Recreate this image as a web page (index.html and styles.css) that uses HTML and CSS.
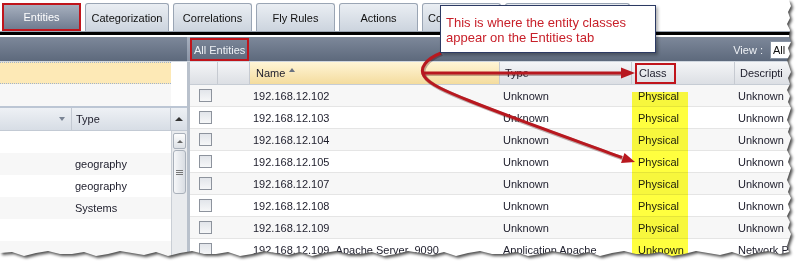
FILE: index.html
```html
<!DOCTYPE html>
<html lang="en">
<head>
    <meta charset="UTF-8">
    <title>Entities</title>
    <link rel="stylesheet" href="styles.css">
</head>
<body>
    <div class="shot">
        <div class="frame">
            <div class="tabs">
                <div class="tab active">Entities</div>
                <div class="tab long">Categorization</div>
                <div class="tab">Correlations</div>
                <div class="tab">Fly Rules</div>
                <div class="tab">Actions</div>
                <div class="tab part">Co</div>
                <div class="tab wide"></div>
            </div>
            <div class="tab-rule"></div>

            <div class="titlebar">
                <div class="title-left"></div>
                <div class="split"></div>
                <div class="title-right">
                    <span class="title">All Entities</span>
                    <span class="view">View :</span>
                    <span class="view-select">All</span>
                </div>
            </div>

            <div class="panes">
                <div class="left">
                    <div class="filter-row"><div class="filter"></div></div>
                    <div class="blank-row"></div>
                    <div class="lhead">
                        <div class="lh-a"><span class="tri-down"></span></div>
                        <div class="lh-b">Type</div>
                        <div class="lh-c"><span class="tri-up"></span></div>
                    </div>
                    <div class="lbody">
                        <div class="lrows">
                            <div class="lrow"></div>
                            <div class="lrow">geography</div>
                            <div class="lrow">geography</div>
                            <div class="lrow">Systems</div>
                            <div class="lrow"></div>
                            <div class="lrow"></div>
                        </div>
                        <div class="vscroll">
                            <div class="sbtn"><span class="tri-up small"></span></div>
                            <div class="thumb"><span class="grip"></span></div>
                        </div>
                    </div>
                </div>

                <div class="split"></div>

                <div class="right">
                    <div class="hrow">
                        <div class="hc"></div>
                        <div class="hc"></div>
                        <div class="hc sorted">Name<span class="caret"></span></div>
                        <div class="hc">Type</div>
                        <div class="hc cls"><span class="mark">Class</span></div>
                        <div class="hc">Descripti</div>
                    </div>
                    <div class="rows">
                        <div class="row"><span class="cb"></span><span></span><span class="c-name">192.168.12.102</span><span class="c-type">Unknown</span><span class="c-class">Physical</span><span class="c-desc">Unknown</span></div>
                        <div class="row"><span class="cb"></span><span></span><span class="c-name">192.168.12.103</span><span class="c-type">Unknown</span><span class="c-class">Physical</span><span class="c-desc">Unknown</span></div>
                        <div class="row"><span class="cb"></span><span></span><span class="c-name">192.168.12.104</span><span class="c-type">Unknown</span><span class="c-class">Physical</span><span class="c-desc">Unknown</span></div>
                        <div class="row"><span class="cb"></span><span></span><span class="c-name">192.168.12.105</span><span class="c-type">Unknown</span><span class="c-class">Physical</span><span class="c-desc">Unknown</span></div>
                        <div class="row"><span class="cb"></span><span></span><span class="c-name">192.168.12.107</span><span class="c-type">Unknown</span><span class="c-class">Physical</span><span class="c-desc">Unknown</span></div>
                        <div class="row"><span class="cb"></span><span></span><span class="c-name">192.168.12.108</span><span class="c-type">Unknown</span><span class="c-class">Physical</span><span class="c-desc">Unknown</span></div>
                        <div class="row"><span class="cb"></span><span></span><span class="c-name">192.168.12.109</span><span class="c-type">Unknown</span><span class="c-class">Physical</span><span class="c-desc">Unknown</span></div>
                        <div class="row"><span class="cb"></span><span></span><span class="c-name">192.168.12.109_Apache Server_9090</span><span class="c-type">Application Apache</span><span class="c-class">Unknown</span><span class="c-desc">Network P</span></div>
                    </div>
                </div>
            </div>

            <!-- annotation layer -->
            <div class="highlight"></div>

            <svg class="arrows" width="792" height="258" viewBox="0 0 792 258">
                <g fill="none" stroke="rgba(60,0,0,0.3)" stroke-width="4" transform="translate(1,1)">
                    <path d="M441 53 C426 59 419 68 424 76 C429 84 445 91 470 101 C520 121 580 142 622 157.5"/>
                    <path d="M423 73 L622 73"/>
                </g>
                <g fill="none" stroke="#b8181f" stroke-width="3">
                    <path d="M441 53 C426 59 419 68 424 76 C429 84 445 91 470 101 C520 121 580 142 622 157.5"/>
                    <path d="M423 73 L622 73"/>
                </g>
                <g fill="#b8181f">
                    <polygon points="635,162 621,163 624.5,153"/>
                    <polygon points="635,73 621,67.5 621,78.5"/>
                </g>
            </svg>

            <div class="callout">This is where the entity classes<br>appear on the Entities tab</div>
        </div>
    </div>
</body>
</html>
```

FILE: styles.css
```css
* {
    margin: 0;
    padding: 0;
    box-sizing: border-box;
}

body {
    background: #fff;
    font-family: "Liberation Sans", Arial, sans-serif;
    font-size: 11px;
    color: #1d1d2b;
}

/* torn screenshot edge */
.shot {
    width: 796px;
    height: 262px;
    filter: drop-shadow(2px 2px 1.5px rgba(0, 0, 0, 0.7));
}

.frame {
    position: relative;
    width: 792px;
    height: 258px;
    overflow: hidden;
    background: #fff;
    clip-path: polygon(0 0, 789px 0,
        791px 6px, 788px 12px, 790px 18px, 787px 24px, 790px 30px, 789px 36px, 791px 42px, 788px 48px,
        790px 54px, 787px 60px, 789px 66px, 791px 72px, 788px 78px, 790px 84px, 787px 90px, 790px 96px,
        788px 102px, 791px 108px, 789px 114px, 787px 120px, 790px 126px, 788px 132px, 791px 138px, 789px 144px,
        787px 150px, 790px 156px, 788px 162px, 791px 168px, 789px 174px, 787px 180px, 790px 186px, 788px 192px,
        791px 198px, 788px 204px, 790px 210px, 787px 216px, 790px 222px, 788px 228px, 791px 234px, 789px 240px,
        787px 246px, 789px 252px,
        780px 254px, 768px 251px, 756px 253px, 744px 256px, 732px 252px, 720px 255px, 708px 253px, 696px 251px,
        684px 254px, 672px 256px, 660px 252px, 648px 254px, 636px 254px, 624px 251px, 612px 253px, 600px 256px,
        588px 252px, 576px 255px, 564px 253px, 552px 251px, 540px 254px, 528px 256px, 516px 252px, 504px 254px,
        492px 254px, 480px 251px, 468px 253px, 456px 256px, 444px 252px, 432px 255px, 420px 253px, 408px 251px,
        396px 254px, 384px 256px, 372px 252px, 360px 254px, 348px 254px, 336px 251px, 324px 253px, 312px 256px,
        300px 252px, 288px 255px, 276px 253px, 264px 251px, 252px 254px, 240px 256px, 228px 252px, 216px 254px,
        204px 254px, 192px 251px, 180px 253px, 168px 256px, 156px 252px, 144px 255px, 132px 253px, 120px 251px,
        108px 254px, 96px 256px, 84px 252px, 72px 254px, 60px 254px, 48px 251px, 36px 253px, 24px 256px,
        12px 252px, 0 253px);
}

/* tabs */
.tabs {
    display: flex;
    gap: 4px;
    height: 31px;
    padding: 3px 0 0 2px;
}

.tab {
    width: 79px;
    display: flex;
    align-items: center;
    justify-content: center;
    border: 1px solid #9aa5b4;
    border-bottom: none;
    border-radius: 3px 3px 0 0;
    background: linear-gradient(#eaeef3, #ccd4de);
    color: #111;
    white-space: nowrap;
    overflow: hidden;
}

.tab.long {
    width: 84px;
}

.tab.wide {
    width: 125px;
}

.tab.part {
    justify-content: flex-start;
    padding-left: 5px;
}

.tab.active {
    border: 2px solid #c0141b;
    border-radius: 0;
    background: linear-gradient(#a6afbe, #707c90);
    color: #fff;
}

.tab-rule {
    height: 6px;
    border-top: 1px solid #9ca6b4;
    border-bottom: 2px solid #fff;
    background: #000;
}

/* title bar */
.titlebar {
    display: flex;
    height: 25px;
    border-bottom: 1px solid #cfd6df;
    background: linear-gradient(#7d889a, #5d697c);
    color: #eef1f5;
}

.title-left {
    width: 187px;
}

.split {
    width: 3px;
    background: #b9c1cc;
}

.titlebar .split {
    background: linear-gradient(#a7b0bf, #8994a6);
}

.title-right {
    flex: 1;
    display: flex;
    align-items: center;
    padding-top: 1px;
}

.title {
    height: 23px;
    display: flex;
    align-items: center;
    padding: 0 2px;
    border: 2px solid #c0141b;
}

.view {
    margin-left: auto;
    margin-right: 7px;
}

.view-select {
    width: 22px;
    height: 18px;
    display: flex;
    align-items: center;
    padding-left: 2px;
    background: #fff;
    border: 1px solid #8893a3;
    color: #111;
    overflow: hidden;
}

/* panes */
.panes {
    display: flex;
    height: 196px;
}

.left {
    width: 187px;
}

.filter-row {
    height: 22px;
}

.filter {
    width: 171px;
    height: 22px;
    background: #fde9b6;
    border-top: 1px dotted #9fb2cc;
    border-bottom: 1px dotted #9fb2cc;
}

.blank-row {
    width: 171px;
    height: 22px;
    background: #f7f7f7;
}

.lhead {
    display: flex;
    height: 25px;
    border-top: 2px solid #bcc6d4;
    border-bottom: 1px solid #c3cad4;
    background: linear-gradient(#eef1f5, #d7dde5);
}

.lh-a {
    width: 72px;
    display: flex;
    align-items: center;
    justify-content: flex-end;
    padding-right: 6px;
    border-right: 1px solid #c3c9d2;
}

.lh-b {
    width: 99px;
    display: flex;
    align-items: center;
    padding-left: 4px;
    border-right: 1px solid #c3c9d2;
}

.lh-c {
    flex: 1;
    display: flex;
    align-items: center;
    justify-content: center;
}

.tri-down {
    border-left: 3.5px solid transparent;
    border-right: 3.5px solid transparent;
    border-top: 4px solid #7a8494;
}

.tri-up {
    border-left: 4px solid transparent;
    border-right: 4px solid transparent;
    border-bottom: 4px solid #333;
}

.tri-up.small {
    border-left-width: 3px;
    border-right-width: 3px;
    border-bottom: 3px solid #666;
}

.lbody {
    display: flex;
}

.lrows {
    width: 171px;
}

.lrow {
    height: 22px;
    display: flex;
    align-items: center;
    padding-left: 75px;
}

.lrow:nth-child(even) {
    background: #f7f7f7;
}

.vscroll {
    flex: 1;
    height: 130px;
    padding: 2px 1px 0;
    background: #e9ebee;
    border-left: 1px solid #c9ced5;
}

.sbtn {
    height: 16px;
    display: flex;
    align-items: center;
    justify-content: center;
    border: 1px solid #a9b0ba;
    border-radius: 2px;
    background: linear-gradient(#fdfdfd, #dde1e6);
}

.thumb {
    height: 44px;
    display: flex;
    align-items: center;
    justify-content: center;
    margin-top: 1px;
    border: 1px solid #a9b0ba;
    border-radius: 3px;
    background: linear-gradient(90deg, #f6f7f9, #d9dde3);
}

.grip {
    width: 7px;
    height: 5px;
    border-top: 1px solid #777;
    border-bottom: 1px solid #777;
    background: linear-gradient(#777, #777) center / 7px 1px no-repeat;
}

/* entity table */
.right {
    flex: 1;
    overflow: hidden;
}

.hrow,
.row {
    display: grid;
    grid-template-columns: 28px 32px 250px 132px 103px 1fr;
    white-space: nowrap;
}

.hrow {
    height: 23px;
    border-bottom: 1px solid #c6ccd4;
}

.hc {
    display: flex;
    align-items: center;
    padding-left: 5px;
    overflow: hidden;
    background: linear-gradient(#f4f5f7, #dcdfe4);
    border-right: 1px solid #c6cad1;
}

.hc.sorted {
    padding-left: 6px;
    background: linear-gradient(#fff5d6, #f4dc9e);
}

.hc.cls {
    padding-left: 3px;
}

.caret {
    align-self: flex-start;
    margin: 6px 0 0 4px;
    border-left: 3px solid transparent;
    border-right: 3px solid transparent;
    border-bottom: 4px solid #6a7280;
}

.mark {
    width: 41px;
    height: 21px;
    display: flex;
    align-items: center;
    padding-left: 2px;
    border: 2px solid #c0141b;
}

.row {
    height: 22px;
    align-items: center;
    border-bottom: 1px solid #e5e5e5;
}

.row:nth-child(odd) {
    background: #f7f7f7;
}

.cb {
    width: 13px;
    height: 13px;
    margin-left: 9px;
    border: 1px solid #8d939d;
    background: linear-gradient(#e2e5ea, #f6f7f8);
}

.c-name,
.c-type,
.c-desc {
    padding-left: 3px;
    overflow: hidden;
}

.c-class {
    padding-left: 6px;
}

/* annotations */
.highlight {
    position: absolute;
    left: 632px;
    top: 92px;
    width: 56px;
    height: 170px;
    background: #ffff3f;
    mix-blend-mode: multiply;
}

.arrows {
    position: absolute;
    left: 0;
    top: 0;
}

.callout {
    position: absolute;
    left: 440px;
    top: 5px;
    width: 216px;
    height: 48px;
    padding: 9px 0 0 5px;
    background: #fff;
    border: 1px solid #2c3a63;
    box-shadow: 2px 2px 3px rgba(0, 0, 0, 0.3);
    color: #c8202a;
    font-size: 13px;
    line-height: 15px;
}
```
